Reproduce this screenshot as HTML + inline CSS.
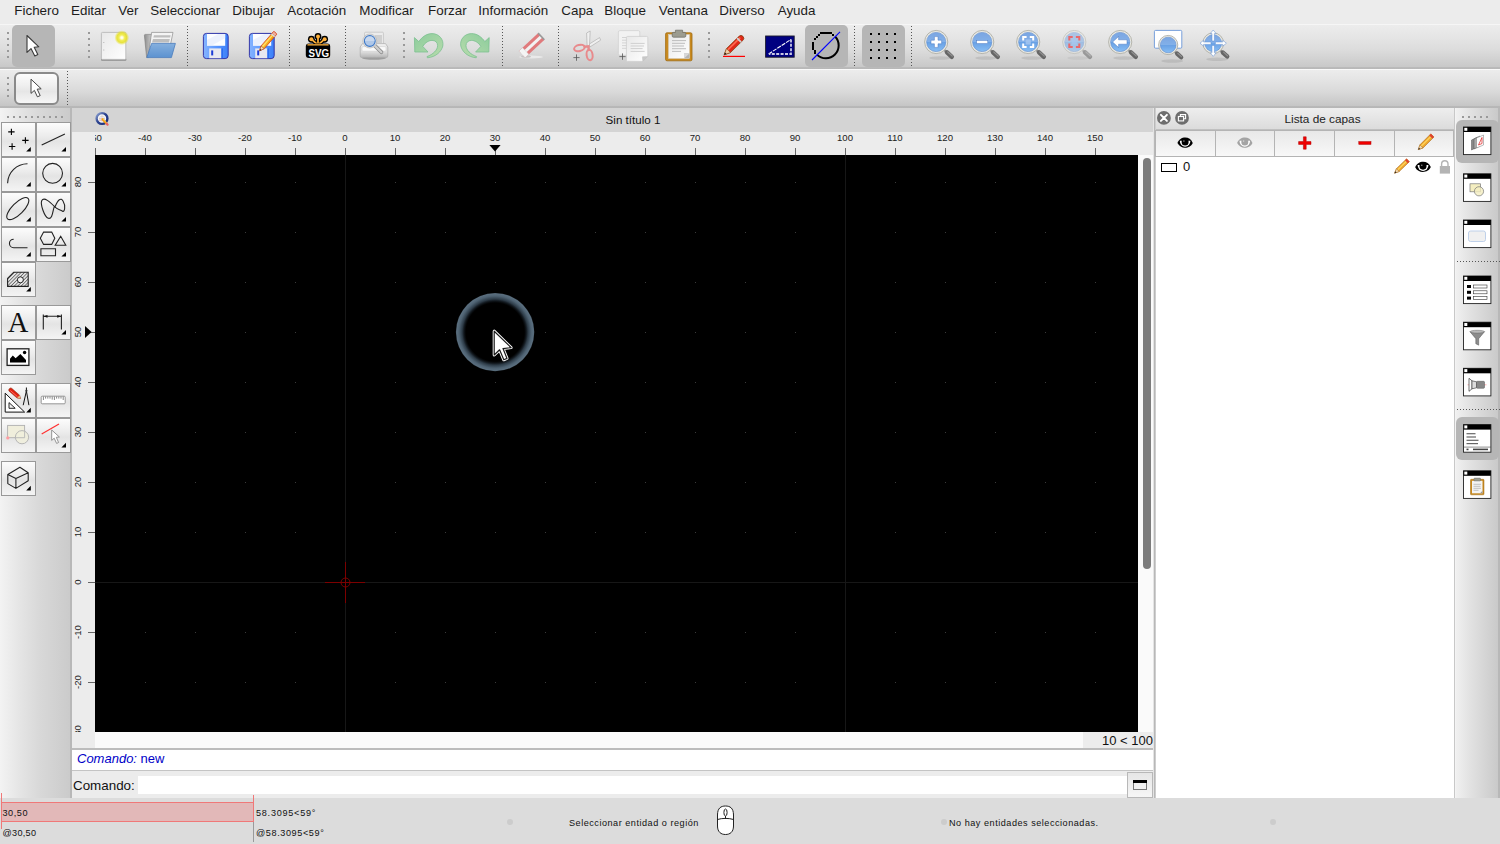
<!DOCTYPE html><html><head><meta charset="utf-8"><title>QCAD</title><style>
*{box-sizing:border-box;margin:0;padding:0}
html,body{width:1500px;height:844px;overflow:hidden}
body{position:relative;background:#ececec;font-family:"Liberation Sans",sans-serif;color:#1a1a1a;font-size:13px}
.a{position:absolute}
svg{position:absolute;overflow:visible}
#menubar{left:0;top:0;width:1500px;height:24px;background:#ececec}
#menubar span{position:absolute;top:2px;font-size:13.4px;line-height:18px;color:#1c1c1c;white-space:nowrap}
#tb1{left:0;top:24px;width:1500px;height:45px;background:linear-gradient(#f6f6f6 0,#f6f6f6 1px,#ececec 1px,#e6e6e6 12px,#dcdcdc 26px,#c9c9c9 42.5px,#bababa 43.2px,#b8b8b8 45px);overflow:hidden}
#tb2{left:0;top:69px;width:1500px;height:39px;background:linear-gradient(#fafafa 0,#fafafa 1px,#ececec 1px,#e5e5e5 10px,#d9d9d9 23px,#c6c6c6 36.5px,#b8b8b8 37.2px,#b6b6b6 39px)}
#left{left:0;top:108px;width:72px;height:690px;background:linear-gradient(90deg,#f3f3f3 0,#e6e6e6 18px,#d8d8d8 40px,#cbcbcb 69.5px,#b8b8b8 70.2px,#b8b8b8 72px)}
#tabbar{left:72px;top:108px;width:1082px;height:24px;background:#d4d4d4}
#hruler{left:72px;top:132px;width:1082px;height:23px;background:#ececec;overflow:hidden}
#vruler{left:72px;top:155px;width:23px;height:577px;background:#ececec;overflow:hidden}
#canvas{left:95px;top:155px;width:1043px;height:577px;background:#000;overflow:hidden}
#vscroll{left:1138px;top:155px;width:16px;height:577px;background:#fafafa}
#hscroll{left:95px;top:732px;width:1059px;height:16px;background:#fafafa}
#status{left:0;top:798px;width:1500px;height:46px;background:#dcdcdc}
#right{left:1156px;top:108px;width:298px;height:690px;background:#fff}
#rtb{left:1454px;top:108px;width:46px;height:690px;background:linear-gradient(90deg,#c8c8c8 0,#c8c8c8 0.8px,#f6f6f6 1px,#f0f0f0 2px,#e2e2e2 16px,#d4d4d4 32px,#cacaca 43.5px,#b8b8b8 44.2px,#b8b8b8 46px)}
.hl{font-size:9.6px;line-height:10px;color:#222;white-space:nowrap;text-align:center;width:40px;margin-left:-20px;top:1px}
.ht{width:1px;height:7px;background:#666;top:16px}
.vl{font-size:9.6px;line-height:10px;color:#222;white-space:nowrap;text-align:center;width:40px;height:10px;transform:rotate(-90deg);transform-origin:center center}
.vt{height:1px;width:7px;background:#666;left:16px}
.tbtn{width:35px;height:35px;border:1px solid #999;background:linear-gradient(#fcfcfc 0%,#ececec 40%,#e4e4e4 55%,#f4f4f4 100%)}
.st{font-size:9.1px;color:#111;white-space:nowrap;line-height:12px;letter-spacing:0.52px}
.hd{width:2px;height:2px;background:#999}
.sep{width:1px;background-image:linear-gradient(#555 0,#555 1px,transparent 1px,transparent 3px);background-size:1px 3px}
.press{background:#b6b6b6;border-radius:5px}
.dot{width:6px;height:6px;border-radius:3px;background:#cccccc}
</style></head><body>
<div id="menubar" class="a">
<span style="left:14.3px">Fichero</span>
<span style="left:71px">Editar</span>
<span style="left:118.3px">Ver</span>
<span style="left:150.3px">Seleccionar</span>
<span style="left:232.3px">Dibujar</span>
<span style="left:287.3px">Acotación</span>
<span style="left:359.3px">Modificar</span>
<span style="left:428px">Forzar</span>
<span style="left:478.3px">Información</span>
<span style="left:561.3px">Capa</span>
<span style="left:604.3px">Bloque</span>
<span style="left:658.7px">Ventana</span>
<span style="left:719.3px">Diverso</span>
<span style="left:777.7px">Ayuda</span>
</div>
<div id="tb1" class="a">
<div class="a hd" style="left:7px;top:8px"></div>
<div class="a hd" style="left:7px;top:14px"></div>
<div class="a hd" style="left:7px;top:20px"></div>
<div class="a hd" style="left:7px;top:26px"></div>
<div class="a hd" style="left:7px;top:32px"></div>
<div class="a hd" style="left:88px;top:8px"></div>
<div class="a hd" style="left:88px;top:14px"></div>
<div class="a hd" style="left:88px;top:20px"></div>
<div class="a hd" style="left:88px;top:26px"></div>
<div class="a hd" style="left:88px;top:32px"></div>
<div class="a hd" style="left:403px;top:8px"></div>
<div class="a hd" style="left:403px;top:14px"></div>
<div class="a hd" style="left:403px;top:20px"></div>
<div class="a hd" style="left:403px;top:26px"></div>
<div class="a hd" style="left:403px;top:32px"></div>
<div class="a hd" style="left:708px;top:8px"></div>
<div class="a hd" style="left:708px;top:14px"></div>
<div class="a hd" style="left:708px;top:20px"></div>
<div class="a hd" style="left:708px;top:26px"></div>
<div class="a hd" style="left:708px;top:32px"></div>
<div class="a sep" style="left:187px;top:2px;height:41px"></div>
<div class="a sep" style="left:289px;top:2px;height:41px"></div>
<div class="a sep" style="left:345px;top:2px;height:41px"></div>
<div class="a sep" style="left:502px;top:2px;height:41px"></div>
<div class="a sep" style="left:558px;top:2px;height:41px"></div>
<div class="a sep" style="left:854px;top:2px;height:41px"></div>
<div class="a sep" style="left:911px;top:2px;height:41px"></div>
<div class="a press" style="left:12px;top:1px;width:43px;height:42px"></div>
<div class="a press" style="left:805px;top:1px;width:43px;height:42px"></div>
<div class="a press" style="left:862px;top:1px;width:43px;height:42px"></div>
<svg style="left:0;top:0" width="1500" height="45" viewBox="0 24 1500 45"><defs>
<linearGradient id="lensg" x1="0" y1="0" x2="0" y2="1"><stop offset="0" stop-color="#5e92dc"/><stop offset="0.5" stop-color="#68a0e4"/><stop offset="1" stop-color="#88bef4"/></linearGradient>
<radialGradient id="glow"><stop offset="0" stop-color="#ffffff"/><stop offset="0.14" stop-color="#fffde0"/><stop offset="0.38" stop-color="#f2ee58"/><stop offset="0.66" stop-color="#e6e024" stop-opacity="0.88"/><stop offset="1" stop-color="#e6e024" stop-opacity="0"/></radialGradient><linearGradient id="fback" x1="0" y1="0" x2="1" y2="0"><stop offset="0" stop-color="#8e8e8e"/><stop offset="1" stop-color="#d0d0d0"/></linearGradient>
<linearGradient id="pg" x1="0" y1="0" x2="1" y2="1"><stop offset="0" stop-color="#e8e8e8"/><stop offset="1" stop-color="#ffffff"/></linearGradient>
<linearGradient id="fold" x1="0" y1="0" x2="0" y2="1"><stop offset="0" stop-color="#86b0de"/><stop offset="1" stop-color="#5c92d0"/></linearGradient>
<linearGradient id="flop" x1="0" y1="0" x2="1" y2="0"><stop offset="0" stop-color="#86b4ff"/><stop offset="0.5" stop-color="#5c98ff"/><stop offset="1" stop-color="#3c80f8"/></linearGradient>
<linearGradient id="undo" x1="0" y1="0" x2="1" y2="1"><stop offset="0" stop-color="#8ccc9c"/><stop offset="1" stop-color="#b8dcac"/></linearGradient>
<linearGradient id="prn" x1="0" y1="0" x2="0" y2="1"><stop offset="0" stop-color="#f2f2f2"/><stop offset="0.6" stop-color="#dcdcdc"/><stop offset="1" stop-color="#b4b4b4"/></linearGradient>
<linearGradient id="pcl" x1="0" y1="0" x2="1" y2="1"><stop offset="0" stop-color="#ffd84a"/><stop offset="1" stop-color="#f09000"/></linearGradient>
</defs><path d="M27 35.5 L27 52.4 L31 48.6 L34.8 56 L37.8 54.6 L34.2 47.2 L38.8 46.8 Z" fill="#fff" stroke="#3a3a3a" stroke-width="1.1" stroke-linejoin="round"/><rect x="101" y="58.6" width="25.4" height="2.2" rx="1" fill="#8c8c8c"/><rect x="101.4" y="32.4" width="24.4" height="27" rx="1" fill="url(#pg)" stroke="#b4b4b4" stroke-width="0.8"/><path d="M103 42.5h1.4M103 50h1.4" stroke="#bbb" stroke-width="0.8"/><circle cx="121.8" cy="37.7" r="7.4" fill="url(#glow)"/><path d="M144.4 35.4 Q144.4 34.4 145.4 34.4 L152 34.4 L148.4 57.4 L146.6 57.4 Z" fill="url(#fback)" stroke="#7a7a7a" stroke-width="0.6"/><path d="M151.6 32.4 L173 32.4 L170.4 45 L148.4 55 Z" fill="#f4f4f4" stroke="#8c8c8c" stroke-width="0.7"/><path d="M154 35.2 L170.6 35.2 L170.2 37.6 L153.4 37.6 Z M153 39 L169.8 39 L169 42.6 L152 42.6 Z" fill="#b4b4b4" opacity="0.85"/><path d="M151.6 43.4 L175.4 43.4 L171.4 57.6 L146.8 57.6 Z" fill="url(#fold)" stroke="#4a7cbc" stroke-width="0.8" stroke-linejoin="round"/><rect x="203.4" y="33.4" width="24.8" height="25.2" rx="3" fill="url(#flop)" stroke="#2828a0" stroke-width="0.9"/><rect x="207.0" y="34" width="18.2" height="11.8" fill="#fcfdff"/><path d="M207.0 40 L218.4 34 L225.20000000000002 34 L225.20000000000002 38 L211.4 45.800 L207.0 45.800Z" fill="#dfe8fb" opacity="0.55"/><rect x="209.20000000000002" y="48.4" width="12.2" height="9.8" fill="#e8e8f0"/><rect x="211.20000000000002" y="50.4" width="2" height="5" fill="#1c3cd8"/><rect x="221.4" y="48.4" width="1.6" height="9.8" fill="#2c6cf0"/><rect x="249.4" y="33.4" width="24.8" height="25.2" rx="3" fill="url(#flop)" stroke="#2828a0" stroke-width="0.9"/><rect x="253.0" y="34" width="18.2" height="11.8" fill="#fcfdff"/><path d="M253.0 40 L264.4 34 L271.2 34 L271.2 38 L257.4 45.800 L253.0 45.800Z" fill="#dfe8fb" opacity="0.55"/><rect x="255.20000000000002" y="48.4" width="12.2" height="9.8" fill="#e8e8f0"/><rect x="257.2" y="50.4" width="2" height="5" fill="#1c3cd8"/><rect x="267.4" y="48.4" width="1.6" height="9.8" fill="#2c6cf0"/><g transform="translate(259.6,50.8) rotate(-49)"><path d="M0 0 L4.6 -2.1 L23 -2.1 Q24 -2.1 24 -1 L24 1 Q24 2.1 23 2.1 L4.6 2.1 Z" fill="url(#pcl)" stroke="#d03818" stroke-width="0.7"/><path d="M5 -0.5 L20 -0.5" stroke="#ffe070" stroke-width="1.1"/><path d="M0 0 L4.6 -2.1 L4.6 2.1 Z" fill="#f4dcb8" stroke="#a04020" stroke-width="0.5"/><path d="M0 0 L1.8 -0.8 L1.8 0.8Z" fill="#222"/><rect x="21.4" y="-2.1" width="2.6" height="4.2" rx="0.8" fill="#f0b0a0" stroke="#d03818" stroke-width="0.5"/><rect x="19.8" y="-2.1" width="1.6" height="4.2" fill="#d8d8d8"/></g><path d="M318 45 L318.00 36.40" stroke="#000" stroke-width="4.2" stroke-linecap="round"/><circle cx="318.00" cy="36.40" r="3.4" fill="#000"/><path d="M318 45 L311.36 39.23" stroke="#000" stroke-width="4.2" stroke-linecap="round"/><circle cx="311.36" cy="39.23" r="3.4" fill="#000"/><path d="M318 45 L324.64 39.23" stroke="#000" stroke-width="4.2" stroke-linecap="round"/><circle cx="324.64" cy="39.23" r="3.4" fill="#000"/><path d="M318 45 L318.00 36.40" stroke="#ffb13b" stroke-width="1.7" stroke-linecap="round"/><circle cx="318.00" cy="36.40" r="2" fill="#ffb13b"/><path d="M318 45 L311.36 39.23" stroke="#ffb13b" stroke-width="1.7" stroke-linecap="round"/><circle cx="311.36" cy="39.23" r="2" fill="#ffb13b"/><path d="M318 45 L324.64 39.23" stroke="#ffb13b" stroke-width="1.7" stroke-linecap="round"/><circle cx="324.64" cy="39.23" r="2" fill="#ffb13b"/><rect x="305.8" y="43.6" width="24.4" height="14.4" rx="3" fill="#000"/><rect x="307.4" y="44.2" width="21.2" height="1.3" fill="#ffb13b"/><text x="308.6" y="57" font-family="Liberation Sans,sans-serif" font-weight="bold" font-size="11" fill="#fff" textLength="20.6" lengthAdjust="spacingAndGlyphs">SVG</text><ellipse cx="374" cy="58" rx="12" ry="1.800" fill="#000" opacity="0.25"/><rect x="364.6" y="32.2" width="18.8" height="13" rx="1" fill="#ececec" stroke="#bdbdbd" stroke-width="0.7"/><rect x="375" y="35" width="7" height="8" fill="#d0d0d0"/><path d="M362.5 43.6 L385.5 43.6 L387.8 47 L387.8 56 Q387.8 57.6 386 57.6 L362 57.6 Q360.200 57.600 360.200 56 L360.200 47 Z" fill="url(#prn)" stroke="#aaa" stroke-width="0.7"/><rect x="362" y="46.6" width="24" height="4.6" rx="1" fill="#fafafa" stroke="#c8c8c8" stroke-width="0.5"/><path d="M374.8 45.6 L381.4 52.2" stroke="#8c8c8c" stroke-width="3.8" stroke-linecap="round"/><path d="M374.8 45.6 L381.4 52.2" stroke="#cfcfcf" stroke-width="2.200" stroke-linecap="round"/><circle cx="369.8" cy="41" r="7" fill="#e2e2e2" stroke="#b0b0b0" stroke-width="0.6"/><circle cx="369.8" cy="41" r="5.400" fill="#b0c8e8" stroke="#3c78c8" stroke-width="1.1"/><path d="M364.7 41 A5.1 5.1 0 0 1 374.900 41 Z" fill="#fff" opacity="0.3"/><path d="M414.4 37.6 L414.8 52 L428 52 L422.8 46.4 C425 42.5 429 40.4 432 40.4 C435.5 40.4 437.6 42.5 437.6 45.6 C437.6 50 433 54.5 427 56.6 L427.4 57.8 C436 57 441.5 51.5 442.8 46 C444 39.5 439 33.6 432 33.6 C426.5 33.6 422 37 418.8 41.6 Z" fill="url(#undo)" stroke="#7cc090" stroke-width="0.8" stroke-linejoin="round"/><g transform="translate(903.6,0) scale(-1,1)"><path d="M414.4 37.6 L414.8 52 L428 52 L422.8 46.4 C425 42.5 429 40.4 432 40.4 C435.5 40.4 437.6 42.5 437.6 45.6 C437.6 50 433 54.5 427 56.6 L427.4 57.8 C436 57 441.5 51.5 442.8 46 C444 39.5 439 33.6 432 33.6 C426.5 33.6 422 37 418.8 41.6 Z" fill="url(#undo)" stroke="#7cc090" stroke-width="0.8" stroke-linejoin="round"/></g><ellipse cx="531" cy="57" rx="12" ry="1.500" fill="#fff" opacity="0.5"/><ellipse cx="526" cy="56.600" rx="5" ry="1.200" fill="#888" opacity="0.4"/><g transform="translate(522,54.4) rotate(-43)"><rect x="0" y="-4.600" width="26.500" height="9.200" fill="#e07a7c"/><rect x="0" y="-1.500" width="26.500" height="3" fill="#f2f2f2"/><rect x="0" y="-4.600" width="5" height="9.200" fill="#f4f4f4" stroke="#ccc" stroke-width="0.400"/><rect x="25.500" y="-4.600" width="1.600" height="9.200" fill="#999"/></g><path d="M587.2 47 L586.6 33 L590.2 31 L589.4 47 Z" fill="#f0f0f0" stroke="#b0b0b0" stroke-width="0.7"/><path d="M589.4 44 L599.6 37.6 L600.6 40.2 L589.8 47 Z" fill="#f0f0f0" stroke="#b0b0b0" stroke-width="0.7"/><ellipse cx="579.4" cy="48" rx="5.400" ry="3" transform="rotate(-14 579.400 48)" fill="none" stroke="#e88a8c" stroke-width="2"/><ellipse cx="589.6" cy="55" rx="3" ry="5.200" transform="rotate(-8 589.600 55)" fill="none" stroke="#e88a8c" stroke-width="2"/><path d="M584.6 46.800 L588.4 46.4 L588.8 50" fill="none" stroke="#e88a8c" stroke-width="2.400" stroke-linecap="round"/><path d="M573.4 57.6 H579.6 M576.5 54.4 V60.800" stroke="#555" stroke-width="0.8"/><rect x="618.4" y="30.6" width="21.4" height="24.6" rx="1.400" fill="#f2f2f2" stroke="#d0d0d0" stroke-width="0.7"/><path d="M622 37.5H628M622 40.200H628M622 42.900H628M622 45.600H628M622 48.300H628" stroke="#d4d4d4" stroke-width="1"/><path d="M627.6 36.400 L646.6 36.400 Q647.8 36.400 647.8 37.600 L647.8 56.400 L642.8 61.400 L627.600 61.400 Q626.400 61.400 626.400 60.200 L626.400 37.600 Q626.400 36.400 627.600 36.400Z" fill="url(#pg)" stroke="#cacaca" stroke-width="0.7"/><path d="M647.8 56.400 L642.8 61.400 L642.400 56.800 Z" fill="#c8c8c8" stroke="#bbb" stroke-width="0.400"/><path d="M630.6 43.400H644.600M630.600 46H644M630.600 48.600H642.600M630.600 51.400H644.600" stroke="#cfcfcf" stroke-width="1"/><path d="M619.4 56.600H625.600M622.500 53.400V59.800" stroke="#555" stroke-width="0.8"/><rect x="665.6" y="32.800" width="26.400" height="28" rx="1.400" fill="#c88a20" stroke="#a06a10" stroke-width="0.8"/><rect x="668.6" y="34.6" width="20.800" height="23.800" fill="url(#pg)" stroke="#d8d8d8" stroke-width="0.5"/><path d="M672 40.600H686M672 43.300H685M672 46H684M672 48.700H686M672 51.400H681" stroke="#bdbdbd" stroke-width="1"/><path d="M684 58.400 L689.400 58.400 L689.400 53.400 L684 53.400 Z" fill="#b4b4b4"/><path d="M684 58.400 L689.400 53.400 L684 53.400Z" fill="#d8d8d8"/><path d="M675.400 30.200 H682.600 V32.400 H685 Q685.800 32.400 685.800 33.400 L685.800 36 Q685.800 37.200 684.600 37.200 L673.400 37.200 Q672.200 37.200 672.200 36 L672.200 33.400 Q672.200 32.400 673 32.400 H675.400 Z" fill="#9c9c90" stroke="#6c6c64" stroke-width="0.7"/><path d="M723 56.400 H745" stroke="#ff0000" stroke-width="1.2"/><g transform="translate(724.2,54.8) rotate(-44.5)"><path d="M0 0 L6 -2.800 L23.500 -2.800 Q26.300 -2.800 26.300 0 Q26.300 2.800 23.500 2.800 L6 2.800 Z" fill="#e02818" stroke="#804010" stroke-width="0.7"/><path d="M6 -1 L23.500 -1" stroke="#ff6a50" stroke-width="1.500"/><path d="M0 0 L6 -2.800 L6 2.800 Z" fill="#f0d0a8" stroke="#804010" stroke-width="0.5"/><path d="M0 0 L2.200 -1.100 L2.200 1.100Z" fill="#111"/><rect x="20" y="-2.800" width="1.800" height="5.600" fill="#d0d0d0"/></g><rect x="765.6" y="36" width="28.600" height="21.200" fill="#000080" stroke="#1a1a2a" stroke-width="0.9"/><path d="M768.6 54 L791 39.400" stroke="#fff" stroke-width="1.1" fill="none" stroke-dasharray="4.2 1"/><path d="M791 39.400 L791 54 L769 54" stroke="#c8c8e4" stroke-width="1.800" fill="none" stroke-dasharray="3 1.400"/><path d="M816.95 54.65 A12.8 12.8 0 0 0 835.05 36.55" fill="none" stroke="#000" stroke-width="2"/><path d="M812 42h2v2h-2zM812 44h2v2h-2zM812 46h2v2h-2zM812 48h2v2h-2zM814 38h2v2h-2zM814 50h2v2h-2zM814 52h2v2h-2zM816 36h2v2h-2zM818 34h2v2h-2zM820 32h2v2h-2zM822 32h2v2h-2zM824 32h2v2h-2zM826 32h2v2h-2zM828 32h2v2h-2zM830 32h2v2h-2zM832 34h2v2h-2z" fill="#000" shape-rendering="crispEdges"/><path d="M812 60 L840 31.800" stroke="#0000ff" stroke-width="1.100"/><path d="M870 33h2v2h-2zM870 41h2v2h-2zM870 49h2v2h-2zM870 57h2v2h-2zM878 33h2v2h-2zM878 41h2v2h-2zM878 49h2v2h-2zM878 57h2v2h-2zM886 33h2v2h-2zM886 41h2v2h-2zM886 49h2v2h-2zM886 57h2v2h-2zM894 33h2v2h-2zM894 41h2v2h-2zM894 49h2v2h-2zM894 57h2v2h-2z" fill="#000"/><g opacity="1.0"><ellipse cx="940.2" cy="58" rx="11" ry="1.8" fill="#000" opacity="0.09"/><path d="M943.6 49.4 L946.7 52.3" stroke="#8a8a8a" stroke-width="2.2" stroke-linecap="round"/><path d="M947.0 52.4 L951.8000000000001 56.8" stroke="#666" stroke-width="4.4" stroke-linecap="round"/><path d="M947.8000000000001 52.0 L952.2 56.0" stroke="#909090" stroke-width="1.2" stroke-linecap="round"/><circle cx="936.2" cy="42" r="11.6" fill="#e8e8e2" stroke="#a8a8a0" stroke-width="0.8"/><circle cx="936.2" cy="42" r="9.6" fill="url(#lensg)" stroke="#5a8ad0" stroke-width="0.6"/><path d="M926.6 42 A9.6 9.6 0 0 1 945.8000000000001 42 Z" fill="#fff" opacity="0.18"/></g><g opacity="1.0"><ellipse cx="986.2" cy="58" rx="11" ry="1.8" fill="#000" opacity="0.09"/><path d="M989.6 49.4 L992.7 52.3" stroke="#8a8a8a" stroke-width="2.2" stroke-linecap="round"/><path d="M993.0 52.4 L997.8000000000001 56.8" stroke="#666" stroke-width="4.4" stroke-linecap="round"/><path d="M993.8000000000001 52.0 L998.2 56.0" stroke="#909090" stroke-width="1.2" stroke-linecap="round"/><circle cx="982.2" cy="42" r="11.6" fill="#e8e8e2" stroke="#a8a8a0" stroke-width="0.8"/><circle cx="982.2" cy="42" r="9.6" fill="url(#lensg)" stroke="#5a8ad0" stroke-width="0.6"/><path d="M972.6 42 A9.6 9.6 0 0 1 991.8000000000001 42 Z" fill="#fff" opacity="0.18"/></g><g opacity="1.0"><ellipse cx="1032.2" cy="58" rx="11" ry="1.8" fill="#000" opacity="0.09"/><path d="M1035.6000000000001 49.4 L1038.7 52.3" stroke="#8a8a8a" stroke-width="2.2" stroke-linecap="round"/><path d="M1039.0 52.4 L1043.8 56.8" stroke="#666" stroke-width="4.4" stroke-linecap="round"/><path d="M1039.8 52.0 L1044.2 56.0" stroke="#909090" stroke-width="1.2" stroke-linecap="round"/><circle cx="1028.2" cy="42" r="11.6" fill="#e8e8e2" stroke="#a8a8a0" stroke-width="0.8"/><circle cx="1028.2" cy="42" r="9.6" fill="url(#lensg)" stroke="#5a8ad0" stroke-width="0.6"/><path d="M1018.6 42 A9.6 9.6 0 0 1 1037.8 42 Z" fill="#fff" opacity="0.18"/></g><g opacity="1.0"><ellipse cx="1124.2" cy="58" rx="11" ry="1.8" fill="#000" opacity="0.09"/><path d="M1127.6000000000001 49.4 L1130.7 52.3" stroke="#8a8a8a" stroke-width="2.2" stroke-linecap="round"/><path d="M1131.0 52.4 L1135.8 56.8" stroke="#666" stroke-width="4.4" stroke-linecap="round"/><path d="M1131.8 52.0 L1136.2 56.0" stroke="#909090" stroke-width="1.2" stroke-linecap="round"/><circle cx="1120.2" cy="42" r="11.6" fill="#e8e8e2" stroke="#a8a8a0" stroke-width="0.8"/><circle cx="1120.2" cy="42" r="9.6" fill="url(#lensg)" stroke="#5a8ad0" stroke-width="0.6"/><path d="M1110.6000000000001 42 A9.6 9.6 0 0 1 1129.8 42 Z" fill="#fff" opacity="0.18"/></g><g opacity="0.55"><ellipse cx="1078.3" cy="58" rx="11" ry="1.8" fill="#000" opacity="0.09"/><path d="M1081.7 49.4 L1084.8 52.3" stroke="#8a8a8a" stroke-width="2.2" stroke-linecap="round"/><path d="M1085.1 52.4 L1089.8999999999999 56.8" stroke="#666" stroke-width="4.4" stroke-linecap="round"/><path d="M1085.8999999999999 52.0 L1090.3 56.0" stroke="#909090" stroke-width="1.2" stroke-linecap="round"/><circle cx="1074.3" cy="42" r="11.6" fill="#e8e8e2" stroke="#a8a8a0" stroke-width="0.8"/><circle cx="1074.3" cy="42" r="9.6" fill="url(#lensg)" stroke="#5a8ad0" stroke-width="0.6"/><path d="M1064.7 42 A9.6 9.6 0 0 1 1083.8999999999999 42 Z" fill="#fff" opacity="0.18"/></g><path d="M931 40.200 H934.400 V36.600 H938 V40.200 H941.600 V43.800 H938 V47.400 H934.400 V43.800 H931 Z" fill="#fff" stroke="#4a78c0" stroke-width="0.5"/><rect x="976.6" y="40.400" width="11.200" height="3.200" fill="#fff" stroke="#4a78c0" stroke-width="0.5"/><g fill="#fff" opacity="1"><path d="M1022.2 36 L1026.6000000000001 36 L1026.6000000000001 38 L1024.2 38 L1024.2 40.4 L1022.2 40.4 Z"/><path d="M1022.2 48 L1026.6000000000001 48 L1026.6000000000001 46 L1024.2 46 L1024.2 43.6 L1022.2 43.6 Z"/><path d="M1034.2 36 L1029.8 36 L1029.8 38 L1032.2 38 L1032.2 40.4 L1034.2 40.4 Z"/><path d="M1034.2 48 L1029.8 48 L1029.8 46 L1032.2 46 L1032.2 43.6 L1034.2 43.6 Z"/></g><rect x="1025.6000000000001" y="39.4" width="5.200" height="5.200" fill="#a8c8f0" opacity="0.8"/><g fill="#f06060" opacity="0.9"><path d="M1068.3 36 L1072.7 36 L1072.7 38 L1070.3 38 L1070.3 40.4 L1068.3 40.4 Z"/><path d="M1068.3 48 L1072.7 48 L1072.7 46 L1070.3 46 L1070.3 43.6 L1068.3 43.6 Z"/><path d="M1080.3 36 L1075.8999999999999 36 L1075.8999999999999 38 L1078.3 38 L1078.3 40.4 L1080.3 40.4 Z"/><path d="M1080.3 48 L1075.8999999999999 48 L1075.8999999999999 46 L1078.3 46 L1078.3 43.6 L1080.3 43.6 Z"/></g><rect x="1071.7" y="39.4" width="5.200" height="5.200" fill="#a8c8f0" opacity="0.7200000000000001"/><path d="M1112.600 42 L1118.600 36.400 L1118.600 39.800 L1127 39.800 L1127 44.200 L1118.600 44.200 L1118.600 47.600 Z" fill="#fff" stroke="#4a78c0" stroke-width="0.5"/><rect x="1154.400" y="30.400" width="27.400" height="17.800" rx="1.200" fill="#fff" stroke="#6a96d8" stroke-width="0.9"/><g opacity="1.0"><ellipse cx="1172.2" cy="61" rx="11" ry="1.8" fill="#000" opacity="0.09"/><path d="M1174.3241379310346 51.12413793103448 L1176.8896551724138 53.52413793103448" stroke="#8a8a8a" stroke-width="2.2" stroke-linecap="round"/><path d="M1177.1379310344828 53.606896551724134 L1181.1103448275862 57.248275862068965" stroke="#666" stroke-width="4.4" stroke-linecap="round"/><path d="M1177.8 53.275862068965516 L1181.441379310345 56.58620689655172" stroke="#909090" stroke-width="1.2" stroke-linecap="round"/><circle cx="1168.2" cy="45" r="9.6" fill="#e8e8e2" stroke="#a8a8a0" stroke-width="0.8"/><circle cx="1168.2" cy="45" r="7.8" fill="url(#lensg)" stroke="#5a8ad0" stroke-width="0.6"/><path d="M1160.4 45 A7.8 7.8 0 0 1 1176.0 45 Z" fill="#fff" opacity="0.18"/></g><g opacity="1.0"><ellipse cx="1217.2" cy="59.2" rx="11" ry="1.8" fill="#000" opacity="0.09"/><path d="M1219.8344827586207 49.834482758620695 L1222.6137931034484 52.43448275862069" stroke="#8a8a8a" stroke-width="2.2" stroke-linecap="round"/><path d="M1222.8827586206896 52.52413793103449 L1227.1862068965518 56.46896551724139" stroke="#666" stroke-width="4.4" stroke-linecap="round"/><path d="M1223.6000000000001 52.16551724137931 L1227.544827586207 55.751724137931035" stroke="#909090" stroke-width="1.2" stroke-linecap="round"/><circle cx="1213.2" cy="43.2" r="10.4" fill="#e8e8e2" stroke="#a8a8a0" stroke-width="0.8"/><circle cx="1213.2" cy="43.2" r="8.4" fill="url(#lensg)" stroke="#5a8ad0" stroke-width="0.6"/><path d="M1204.8 43.2 A8.4 8.4 0 0 1 1221.6000000000001 43.2 Z" fill="#fff" opacity="0.18"/></g><g fill="#fff" stroke="#5a8ad0" stroke-width="0.5"><g transform="translate(1213.200,43.200) rotate(0)"><path d="M-1.200 -2.200 L-1.200 -9.600 L-2.900 -9.600 L0 -13.200 L2.900 -9.600 L1.200 -9.600 L1.200 -2.200 Z"/></g><g transform="translate(1213.200,43.200) rotate(90)"><path d="M-1.200 -2.200 L-1.200 -9.600 L-2.900 -9.600 L0 -13.200 L2.900 -9.600 L1.200 -9.600 L1.200 -2.200 Z"/></g><g transform="translate(1213.200,43.200) rotate(180)"><path d="M-1.200 -2.200 L-1.200 -9.600 L-2.900 -9.600 L0 -13.200 L2.900 -9.600 L1.200 -9.600 L1.200 -2.200 Z"/></g><g transform="translate(1213.200,43.200) rotate(270)"><path d="M-1.200 -2.200 L-1.200 -9.600 L-2.900 -9.600 L0 -13.200 L2.900 -9.600 L1.200 -9.600 L1.200 -2.200 Z"/></g></g></svg>
</div>
<div id="tb2" class="a">
<div class="a hd" style="left:7px;top:8px"></div>
<div class="a hd" style="left:7px;top:14px"></div>
<div class="a hd" style="left:7px;top:20px"></div>
<div class="a hd" style="left:7px;top:26px"></div>
<div class="a sep" style="left:67px;top:2px;height:35px"></div>
<div class="a" style="left:14px;top:3px;width:45px;height:33px;border:2px solid #8a8a8a;border-radius:6px;background:linear-gradient(#fcfcfc 0%,#efefef 40%,#e6e6e6 60%,#f6f6f6 100%)"></div>
<svg style="left:0;top:0" width="1500" height="39" viewBox="0 69 1500 39"><path d="M31 79.2 L31 93.4 L34.4 90.4 L37.4 96.800 L40.200 95.600 L37.200 89.200 L41.200 88.800 Z" fill="#fff" stroke="#444" stroke-width="1" stroke-linejoin="round"/></svg>
</div>
<div id="left" class="a">
<div class="a hd" style="left:7px;top:8px"></div>
<div class="a hd" style="left:13px;top:8px"></div>
<div class="a hd" style="left:19px;top:8px"></div>
<div class="a hd" style="left:25px;top:8px"></div>
<div class="a hd" style="left:31px;top:8px"></div>
<div class="a hd" style="left:37px;top:8px"></div>
<div class="a hd" style="left:43px;top:8px"></div>
<div class="a hd" style="left:49px;top:8px"></div>
<div class="a hd" style="left:55px;top:8px"></div>
<div class="a hd" style="left:61px;top:8px"></div>
<div class="a tbtn" style="left:1px;top:14px"></div>
<div class="a tbtn" style="left:36px;top:14px"></div>
<div class="a tbtn" style="left:1px;top:49px"></div>
<div class="a tbtn" style="left:36px;top:49px"></div>
<div class="a tbtn" style="left:1px;top:84px"></div>
<div class="a tbtn" style="left:36px;top:84px"></div>
<div class="a tbtn" style="left:1px;top:119px"></div>
<div class="a tbtn" style="left:36px;top:119px"></div>
<div class="a tbtn" style="left:1px;top:154px"></div>
<div class="a tbtn" style="left:1px;top:197px"></div>
<div class="a tbtn" style="left:36px;top:197px"></div>
<div class="a tbtn" style="left:1px;top:232px"></div>
<div class="a tbtn" style="left:1px;top:275px"></div>
<div class="a tbtn" style="left:36px;top:275px"></div>
<div class="a tbtn" style="left:1px;top:310px"></div>
<div class="a tbtn" style="left:36px;top:310px"></div>
<div class="a tbtn" style="left:1px;top:353px"></div>
<svg style="left:0;top:0" width="72" height="690" viewBox="0 108 72 690"><path d="M30.8 151.6 L26.200000000000003 151.6 L30.8 147.0 Z" fill="#000"/><path d="M66 151.6 L61.4 151.6 L66 147.0 Z" fill="#000"/><path d="M30.8 186.6 L26.200000000000003 186.6 L30.8 182.0 Z" fill="#000"/><path d="M66 186.6 L61.4 186.6 L66 182.0 Z" fill="#000"/><path d="M30.8 221.6 L26.200000000000003 221.6 L30.8 217.0 Z" fill="#000"/><path d="M66 221.6 L61.4 221.6 L66 217.0 Z" fill="#000"/><path d="M30.8 256.6 L26.200000000000003 256.6 L30.8 252.00000000000003 Z" fill="#000"/><path d="M66 256.6 L61.4 256.6 L66 252.00000000000003 Z" fill="#000"/><path d="M30.8 291.6 L26.200000000000003 291.6 L30.8 287.0 Z" fill="#000"/><path d="M66 334.6 L61.4 334.6 L66 330.0 Z" fill="#000"/><path d="M30.8 412.4 L26.200000000000003 412.4 L30.8 407.79999999999995 Z" fill="#000"/><path d="M66 447.4 L61.4 447.4 L66 442.79999999999995 Z" fill="#000"/><path d="M30.8 490.4 L26.200000000000003 490.4 L30.8 485.79999999999995 Z" fill="#000"/><path d="M8.2 131.9H14.600000000000001M11.4 128.70000000000002V135.1M22.2 140.4H28.599999999999998M25.4 137.20000000000002V143.6M8.899999999999999 146.5H15.3M12.1 143.3V149.7" stroke="#000" stroke-width="1.1" fill="none"/><path d="M41.7 144.9 L64.9 134" stroke="#222" stroke-width="1.1" fill="none"/><path d="M7.6 183.2 A20 20 0 0 1 27.5 163.8" stroke="#222" stroke-width="1.1" fill="none"/><circle cx="52.6" cy="173.3" r="9.9" stroke="#222" stroke-width="1.1" fill="none"/><ellipse cx="17.800" cy="208.600" rx="14.500" ry="5.700" transform="rotate(-45 17.800 208.600)" stroke="#222" stroke-width="1.1" fill="none"/><path d="M41.8 200.5 C44 196.500 50 202 55 207 C58 199 61 197.500 63 201 C66 206 64.500 212.500 62.600 211.200 C60 209.500 57 209.500 55 207 C53 204.500 53.500 220 48.300 218.300 C44.500 217 40 204 41.800 200.500 Z" stroke="#222" stroke-width="1.1" fill="none"/><path d="M13.700 239.200 A4.250 4.250 0 0 0 13.700 247.700 L27.500 247.700" stroke="#222" stroke-width="1.1" fill="none"/><path d="M40.300 238.200 L43.600 232.100 L51.700 232.100 L54.800 238.200 L51.700 244.400 L43.600 244.400 Z M60.700 236.300 L55.200 245.300 L65.800 245.300 Z M40.900 248.700 H55.500 V255.800 H40.900 Z" stroke="#222" stroke-width="1.1" fill="none"/><defs><pattern id="hat" width="2.400" height="2.400" patternUnits="userSpaceOnUse" patternTransform="rotate(-45)"><rect width="2.400" height="2.400" fill="#e4e4e4"/><path d="M0 1.200H2.400" stroke="#555" stroke-width="0.7"/></pattern></defs><path d="M7.600 278.400 L13.700 272.200 L28.200 272.200 L28.200 286.400 L7.600 286.400 Z" fill="url(#hat)" stroke="#222" stroke-width="1.1"/><circle cx="20.400" cy="279.800" r="3" fill="#f0f0f0" stroke="#222" stroke-width="1"/><text x="18" y="331.500" font-family="Liberation Serif,serif" font-size="28.500" fill="#111" text-anchor="middle">A</text><path d="M43.300 314.400 V329.600 M61.400 314.400 V329.600 M43.300 316.300 H61.400" stroke="#222" stroke-width="1.100" fill="none"/><path d="M43.300 316.300 L47.500 314.900 L47.500 317.700 Z M61.400 316.300 L57.200 314.900 L57.200 317.700 Z" fill="#111"/><rect x="7.100" y="348.800" width="21.800" height="16.600" fill="#fff" stroke="#222" stroke-width="1.300"/><path d="M10 362.500 L10 358.700 L12.800 355.400 L15.600 358.200 L20.400 354 L26 360 L26 362.500 Z" fill="#000"/><circle cx="24.600" cy="352.500" r="1.700" fill="#000"/><path d="M5.200 393.200 L5.200 412.100 L24.600 412.100 Z" fill="#fff" stroke="#111" stroke-width="1" stroke-linejoin="miter"/><path d="M9 402.600 L9 408.300 L15.200 408.300 Z" fill="#f0f0f0" stroke="#111" stroke-width="0.900"/><g transform="translate(20.600,398.600) rotate(-139)"><path d="M0 0 L3 -1.900 L13.500 -1.900 Q15 -1.900 15 0 Q15 1.900 13.500 1.900 L3 1.900 Z" fill="#e02010" stroke="#803010" stroke-width="0.5"/><path d="M0 0 L3 -1.900 L3 1.900Z" fill="#e8b880"/><path d="M3.500 -0.600 L13 -0.600" stroke="#ff7060" stroke-width="0.900"/></g><path d="M26.400 387.500 L26.400 391 M26.400 391 L23.200 405.200 M26.400 391 L28.900 405.200" stroke="#111" stroke-width="1" fill="none"/><circle cx="26.400" cy="390.800" r="1.100" fill="#333"/><rect x="41.200" y="396.200" width="24" height="7.600" rx="1" fill="#fff" stroke="#8c8c8c" stroke-width="0.9"/><path d="M43.4 396.600V400.0M45.6 396.600V398.6M47.8 396.600V398.6M50.0 396.600V398.6M52.2 396.600V399.6M54.4 396.600V400.0M56.6 396.600V398.6M58.8 396.600V398.6M61.0 396.600V398.6M63.2 396.600V400.0" stroke="#555" stroke-width="0.7"/><rect x="7.600" y="425.400" width="17" height="12.300" fill="#f0eedc" stroke="#b0b0b0" stroke-width="0.9"/><circle cx="22" cy="437.200" r="6.600" fill="#f0eedc" fill-opacity="0.85" stroke="#b0b0b0" stroke-width="0.9"/><path d="M14.600 437.700 H24.600 V430.400" stroke="#b8b8b8" stroke-width="0.9" fill="none"/><circle cx="7.800" cy="437.900" r="1.600" fill="#ff9ca0"/><path d="M41.700 433.900 L59 424" stroke="#ff3030" stroke-width="1.200"/><path d="M51.700 430 L51.700 440.400 L54.200 438.200 L56.600 443.400 L58.600 442.500 L56.300 437.300 L59.400 437 Z" fill="#fff" stroke="#888" stroke-width="0.9" stroke-linejoin="round"/><path d="M19.900 467.300 L7.800 474.500 L15.900 478.400 L28.200 472.700 Z M7.800 474.500 L7.800 483.600 L15.900 488.400 L28.200 480.800 L28.200 472.700 M15.900 478.400 L15.900 488.400" stroke="#222" stroke-width="1.100" fill="none" stroke-linejoin="round"/></svg>
</div>
<div id="tabbar" class="a"><div class="a" style="left:0;width:1122px;top:5px;text-align:center;font-size:11.6px;line-height:14px;color:#111">Sin título 1</div><svg style="left:22px;top:3px" width="16" height="16" viewBox="0 0 16 16"><defs><linearGradient id="qr" x1="0" y1="0" x2="1" y2="1"><stop offset="0" stop-color="#92a6d4"/><stop offset="0.45" stop-color="#2c4490"/><stop offset="1" stop-color="#1a2c78"/></linearGradient></defs><circle cx="8" cy="7.500" r="5.400" fill="#f6f6f6" stroke="url(#qr)" stroke-width="2.400"/><path d="M5 7.500H11M8 4.500V10.500" stroke="#d8b0b0" stroke-width="0.600"/><path d="M5.200 9.200 H8" stroke="#e88080" stroke-width="0.600"/><circle cx="8" cy="7.500" r="2.400" fill="none" stroke="#c8c8c8" stroke-width="0.500"/><path d="M8.600 8.200 L12.400 12.400" stroke="#f09c10" stroke-width="2.200" stroke-linecap="round"/><path d="M8.900 7.900 L12.300 11.700" stroke="#ffd850" stroke-width="0.800" stroke-linecap="round"/><path d="M12.600 12.600 L13.600 13.700" stroke="#e86464" stroke-width="2.200" stroke-linecap="round"/></svg></div>
<div id="hruler" class="a">
<div class="a hl" style="left:23px">-50</div><div class="a ht" style="left:23px"></div>
<div class="a hl" style="left:73px">-40</div><div class="a ht" style="left:73px"></div>
<div class="a hl" style="left:123px">-30</div><div class="a ht" style="left:123px"></div>
<div class="a hl" style="left:173px">-20</div><div class="a ht" style="left:173px"></div>
<div class="a hl" style="left:223px">-10</div><div class="a ht" style="left:223px"></div>
<div class="a hl" style="left:273px">0</div><div class="a ht" style="left:273px"></div>
<div class="a hl" style="left:323px">10</div><div class="a ht" style="left:323px"></div>
<div class="a hl" style="left:373px">20</div><div class="a ht" style="left:373px"></div>
<div class="a hl" style="left:423px">30</div><div class="a ht" style="left:423px"></div>
<div class="a hl" style="left:473px">40</div><div class="a ht" style="left:473px"></div>
<div class="a hl" style="left:523px">50</div><div class="a ht" style="left:523px"></div>
<div class="a hl" style="left:573px">60</div><div class="a ht" style="left:573px"></div>
<div class="a hl" style="left:623px">70</div><div class="a ht" style="left:623px"></div>
<div class="a hl" style="left:673px">80</div><div class="a ht" style="left:673px"></div>
<div class="a hl" style="left:723px">90</div><div class="a ht" style="left:723px"></div>
<div class="a hl" style="left:773px">100</div><div class="a ht" style="left:773px"></div>
<div class="a hl" style="left:823px">110</div><div class="a ht" style="left:823px"></div>
<div class="a hl" style="left:873px">120</div><div class="a ht" style="left:873px"></div>
<div class="a hl" style="left:923px">130</div><div class="a ht" style="left:923px"></div>
<div class="a hl" style="left:973px">140</div><div class="a ht" style="left:973px"></div>
<div class="a hl" style="left:1023px">150</div><div class="a ht" style="left:1023px"></div>
<svg style="left:0;top:0" width="1082" height="23"><path d="M417.4 13 L428.6 13 L423 19.6 Z" fill="#000"/></svg>
</div>
<div id="vruler" class="a">
<div class="a vl" style="left:-14px;top:22px">80</div><div class="a vt" style="top:27px"></div>
<div class="a vl" style="left:-14px;top:72px">70</div><div class="a vt" style="top:77px"></div>
<div class="a vl" style="left:-14px;top:122px">60</div><div class="a vt" style="top:127px"></div>
<div class="a vl" style="left:-14px;top:172px">50</div><div class="a vt" style="top:177px"></div>
<div class="a vl" style="left:-14px;top:222px">40</div><div class="a vt" style="top:227px"></div>
<div class="a vl" style="left:-14px;top:272px">30</div><div class="a vt" style="top:277px"></div>
<div class="a vl" style="left:-14px;top:322px">20</div><div class="a vt" style="top:327px"></div>
<div class="a vl" style="left:-14px;top:372px">10</div><div class="a vt" style="top:377px"></div>
<div class="a vl" style="left:-14px;top:422px">0</div><div class="a vt" style="top:427px"></div>
<div class="a vl" style="left:-14px;top:472px">-10</div><div class="a vt" style="top:477px"></div>
<div class="a vl" style="left:-14px;top:522px">-20</div><div class="a vt" style="top:527px"></div>
<div class="a vl" style="left:-14px;top:572px">-30</div><div class="a vt" style="top:577px"></div>
<svg style="left:0;top:0" width="23" height="593"><path d="M13 171 L13 183 L19.6 177 Z" fill="#000"/></svg>
</div>
<div class="a" style="left:72px;top:132px;width:23px;height:23px;background:#ececec"></div>
<div id="canvas" class="a"><svg style="left:0;top:0" width="1043" height="577">
<defs><radialGradient id="ring" cx="50%" cy="50%" r="50%"><stop offset="0" stop-color="#000" stop-opacity="0"/><stop offset="0.74" stop-color="#101820" stop-opacity="0"/><stop offset="0.84" stop-color="#2c3a46"/><stop offset="0.92" stop-color="#4e6272"/><stop offset="0.975" stop-color="#5a6e7e"/><stop offset="1" stop-color="#485a68"/></radialGradient></defs>
<path d="M50 27h1v1h-1zM50 77h1v1h-1zM50 127h1v1h-1zM50 177h1v1h-1zM50 227h1v1h-1zM50 277h1v1h-1zM50 327h1v1h-1zM50 377h1v1h-1zM50 427h1v1h-1zM50 477h1v1h-1zM50 527h1v1h-1zM100 27h1v1h-1zM100 77h1v1h-1zM100 127h1v1h-1zM100 177h1v1h-1zM100 227h1v1h-1zM100 277h1v1h-1zM100 327h1v1h-1zM100 377h1v1h-1zM100 427h1v1h-1zM100 477h1v1h-1zM100 527h1v1h-1zM150 27h1v1h-1zM150 77h1v1h-1zM150 127h1v1h-1zM150 177h1v1h-1zM150 227h1v1h-1zM150 277h1v1h-1zM150 327h1v1h-1zM150 377h1v1h-1zM150 427h1v1h-1zM150 477h1v1h-1zM150 527h1v1h-1zM200 27h1v1h-1zM200 77h1v1h-1zM200 127h1v1h-1zM200 177h1v1h-1zM200 227h1v1h-1zM200 277h1v1h-1zM200 327h1v1h-1zM200 377h1v1h-1zM200 427h1v1h-1zM200 477h1v1h-1zM200 527h1v1h-1zM250 27h1v1h-1zM250 77h1v1h-1zM250 127h1v1h-1zM250 177h1v1h-1zM250 227h1v1h-1zM250 277h1v1h-1zM250 327h1v1h-1zM250 377h1v1h-1zM250 427h1v1h-1zM250 477h1v1h-1zM250 527h1v1h-1zM300 27h1v1h-1zM300 77h1v1h-1zM300 127h1v1h-1zM300 177h1v1h-1zM300 227h1v1h-1zM300 277h1v1h-1zM300 327h1v1h-1zM300 377h1v1h-1zM300 427h1v1h-1zM300 477h1v1h-1zM300 527h1v1h-1zM350 27h1v1h-1zM350 77h1v1h-1zM350 127h1v1h-1zM350 177h1v1h-1zM350 227h1v1h-1zM350 277h1v1h-1zM350 327h1v1h-1zM350 377h1v1h-1zM350 427h1v1h-1zM350 477h1v1h-1zM350 527h1v1h-1zM400 27h1v1h-1zM400 77h1v1h-1zM400 127h1v1h-1zM400 177h1v1h-1zM400 227h1v1h-1zM400 277h1v1h-1zM400 327h1v1h-1zM400 377h1v1h-1zM400 427h1v1h-1zM400 477h1v1h-1zM400 527h1v1h-1zM450 27h1v1h-1zM450 77h1v1h-1zM450 127h1v1h-1zM450 177h1v1h-1zM450 227h1v1h-1zM450 277h1v1h-1zM450 327h1v1h-1zM450 377h1v1h-1zM450 427h1v1h-1zM450 477h1v1h-1zM450 527h1v1h-1zM500 27h1v1h-1zM500 77h1v1h-1zM500 127h1v1h-1zM500 177h1v1h-1zM500 227h1v1h-1zM500 277h1v1h-1zM500 327h1v1h-1zM500 377h1v1h-1zM500 427h1v1h-1zM500 477h1v1h-1zM500 527h1v1h-1zM550 27h1v1h-1zM550 77h1v1h-1zM550 127h1v1h-1zM550 177h1v1h-1zM550 227h1v1h-1zM550 277h1v1h-1zM550 327h1v1h-1zM550 377h1v1h-1zM550 427h1v1h-1zM550 477h1v1h-1zM550 527h1v1h-1zM600 27h1v1h-1zM600 77h1v1h-1zM600 127h1v1h-1zM600 177h1v1h-1zM600 227h1v1h-1zM600 277h1v1h-1zM600 327h1v1h-1zM600 377h1v1h-1zM600 427h1v1h-1zM600 477h1v1h-1zM600 527h1v1h-1zM650 27h1v1h-1zM650 77h1v1h-1zM650 127h1v1h-1zM650 177h1v1h-1zM650 227h1v1h-1zM650 277h1v1h-1zM650 327h1v1h-1zM650 377h1v1h-1zM650 427h1v1h-1zM650 477h1v1h-1zM650 527h1v1h-1zM700 27h1v1h-1zM700 77h1v1h-1zM700 127h1v1h-1zM700 177h1v1h-1zM700 227h1v1h-1zM700 277h1v1h-1zM700 327h1v1h-1zM700 377h1v1h-1zM700 427h1v1h-1zM700 477h1v1h-1zM700 527h1v1h-1zM750 27h1v1h-1zM750 77h1v1h-1zM750 127h1v1h-1zM750 177h1v1h-1zM750 227h1v1h-1zM750 277h1v1h-1zM750 327h1v1h-1zM750 377h1v1h-1zM750 427h1v1h-1zM750 477h1v1h-1zM750 527h1v1h-1zM800 27h1v1h-1zM800 77h1v1h-1zM800 127h1v1h-1zM800 177h1v1h-1zM800 227h1v1h-1zM800 277h1v1h-1zM800 327h1v1h-1zM800 377h1v1h-1zM800 427h1v1h-1zM800 477h1v1h-1zM800 527h1v1h-1zM850 27h1v1h-1zM850 77h1v1h-1zM850 127h1v1h-1zM850 177h1v1h-1zM850 227h1v1h-1zM850 277h1v1h-1zM850 327h1v1h-1zM850 377h1v1h-1zM850 427h1v1h-1zM850 477h1v1h-1zM850 527h1v1h-1zM900 27h1v1h-1zM900 77h1v1h-1zM900 127h1v1h-1zM900 177h1v1h-1zM900 227h1v1h-1zM900 277h1v1h-1zM900 327h1v1h-1zM900 377h1v1h-1zM900 427h1v1h-1zM900 477h1v1h-1zM900 527h1v1h-1zM950 27h1v1h-1zM950 77h1v1h-1zM950 127h1v1h-1zM950 177h1v1h-1zM950 227h1v1h-1zM950 277h1v1h-1zM950 327h1v1h-1zM950 377h1v1h-1zM950 427h1v1h-1zM950 477h1v1h-1zM950 527h1v1h-1zM1000 27h1v1h-1zM1000 77h1v1h-1zM1000 127h1v1h-1zM1000 177h1v1h-1zM1000 227h1v1h-1zM1000 277h1v1h-1zM1000 327h1v1h-1zM1000 377h1v1h-1zM1000 427h1v1h-1zM1000 477h1v1h-1zM1000 527h1v1h-1z" fill="#3a3a3a"/>
<path d="M250.5 0V577M750.5 0V577M0 427.5H1043" stroke="#171717" stroke-width="1" fill="none"/>
<path d="M230 427.5H270M250.5 407V448" stroke="#7c0000" stroke-width="1" fill="none"/><circle cx="250.5" cy="427.5" r="4.5" stroke="#7c0000" fill="none"/>
<circle cx="400.1" cy="177.1" r="39.2" fill="url(#ring)"/>
<g transform="translate(399.2,176.2)"><path d="M0 0 L0 23.8 L5.4 18.6 L9.6 28.6 L12.8 27.2 L8.8 17.4 L16.9 16.4 Z" fill="#fff" stroke="#fff" stroke-width="3" stroke-linejoin="round"/><path d="M0 0 L0 23.8 L5.4 18.6 L9.6 28.6 L12.8 27.2 L8.8 17.4 L16.9 16.4 Z" fill="#fff" stroke="#1a1a1a" stroke-width="1.2" stroke-linejoin="round"/></g>
</svg></div>
<div id="vscroll" class="a"><div class="a" style="left:5px;top:3px;width:8px;height:411px;border-radius:4px;background:#7c7c7c"></div></div>
<div id="hscroll" class="a"><div class="a" style="right:0;top:0;width:71px;height:16px;background:#ececec;text-align:right;font-size:13px;line-height:17px;color:#111;padding-right:1px">10 &lt; 100</div></div>
<div class="a" style="left:1153px;top:108px;width:1px;height:690px;background:#e4e4e4"></div><div class="a" style="left:1154px;top:108px;width:1px;height:690px;background:#b8b8b8"></div><div class="a" style="left:1155px;top:108px;width:1px;height:690px;background:#cecece"></div>
<div class="a" style="left:72px;top:748px;width:1081px;height:2px;background:#bcbcbc"></div>
<div class="a" style="left:72px;top:750px;width:1081px;height:21px;background:#fff;border-bottom:1px solid #c4c4c4"><div class="a" style="left:5px;top:1px;font-size:13px;line-height:16px;color:#0000c8;white-space:nowrap"><i>Comando:</i> new</div></div>
<div class="a" style="left:73px;top:777.5px;font-size:13.4px;line-height:16px;color:#111">Comando:</div>
<div class="a" style="left:138px;top:776px;width:989px;height:18px;background:#fff"></div>
<div class="a" style="left:1127px;top:772px;width:26px;height:26px;border:1px solid #b8b8b8;background:linear-gradient(#e6e6e6,#f6f6f6)"><div class="a" style="left:5px;top:7px;width:14px;height:10px;border:1px solid #777;background:#f0f0f0"></div><div class="a" style="left:5px;top:7px;width:14px;height:3px;background:#000"></div></div>
<div id="right" class="a">
<div class="a" style="left:0;top:0;width:298px;height:22px;background:linear-gradient(#eeeeee,#dcdcdc);border-bottom:1px solid #c0c0c0"><div class="a" style="left:0;width:333px;top:4px;text-align:center;font-size:11.8px;line-height:14px;color:#222">Lista de capas</div></div>
<div class="a" style="left:-1.2px;top:22px;width:60.8px;height:26.5px;border:1px solid #b4b4b4;background:linear-gradient(#e8e8e8,#f8f8f8)"></div>
<div class="a" style="left:58.5px;top:22px;width:60.8px;height:26.5px;border:1px solid #b4b4b4;background:linear-gradient(#e8e8e8,#f8f8f8)"></div>
<div class="a" style="left:118.2px;top:22px;width:60.8px;height:26.5px;border:1px solid #b4b4b4;background:linear-gradient(#e8e8e8,#f8f8f8)"></div>
<div class="a" style="left:177.9px;top:22px;width:60.8px;height:26.5px;border:1px solid #b4b4b4;background:linear-gradient(#e8e8e8,#f8f8f8)"></div>
<div class="a" style="left:237.6px;top:22px;width:60.8px;height:26.5px;border:1px solid #b4b4b4;background:linear-gradient(#e8e8e8,#f8f8f8)"></div>
<div class="a" style="left:0;top:47.500px;width:298px;height:1px;background:#b4b4b4"></div>
<div class="a" style="left:5px;top:55px;width:16px;height:9px;border:1px solid #000;background:#fff"></div>
<div class="a" style="left:27px;top:51px;font-size:13px;line-height:16px;color:#111">0</div>
<svg style="left:0;top:0" width="298" height="690" viewBox="1156 108 298 690"><circle cx="1163.900" cy="117.900" r="6.900" fill="#6e6e6e"/><path d="M1160.900 114.900 L1166.900 120.900 M1166.900 114.900 L1160.900 120.900" stroke="#fff" stroke-width="2" stroke-linecap="round"/><circle cx="1182" cy="117.900" r="6.900" fill="#6e6e6e"/><path d="M1180.400 116.300 V114.600 H1185.600 V118.800 H1183.800" stroke="#fff" stroke-width="1.100" fill="none"/><rect x="1178.400" y="116.500" width="5.200" height="4.400" fill="none" stroke="#fff" stroke-width="1.100"/><g transform="translate(1185.1,142.6) scale(1.0)"><path d="M-7.650 0.500 C-5.600 -6.200 4.800 -7.400 7.650 0.300 C5.600 5.800 -4.200 7.600 -7.650 0.500 Z" fill="#000"/><path d="M-5.300 -1.800 A5.300 6 0 0 0 5.300 -1.800 Z" fill="#fff"/><circle cx="0" cy="-0.700" r="3.500" fill="#000"/><circle cx="-1.200" cy="-1.500" r="0.800" fill="#8a8a8a"/></g><g transform="translate(1244.8,142.6) scale(1.0)"><path d="M-7.650 0.500 C-5.600 -6.200 4.800 -7.400 7.650 0.300 C5.600 5.800 -4.200 7.600 -7.650 0.500 Z" fill="#a4a4a4"/><path d="M-5.300 -1.800 A5.300 6 0 0 0 5.300 -1.800 Z" fill="#fff"/><circle cx="0" cy="-0.700" r="3.500" fill="#a4a4a4"/><circle cx="-1.200" cy="-1.500" r="0.800" fill="#d0d0d0"/></g><path d="M1303.400 136.800 H1306.200 V141.600 H1311 V144.400 H1306.200 V149.200 H1303.400 V144.400 H1298.600 V141.600 H1303.400 Z" fill="#f00000" stroke="#b00000" stroke-width="0.5"/><rect x="1358.800" y="141.600" width="12.200" height="2.800" fill="#f00000" stroke="#b00000" stroke-width="0.5"/><g transform="translate(1418.3,149.6) rotate(-45.2)"><path d="M0 0 L4.500 -2.2 L20.011246837716122 -2.2 L20.011246837716122 2.2 L4.500 2.2 Z" fill="#f0a830" stroke="#9c5c10" stroke-width="0.5"/><path d="M4.500 -0.300 L18.011246837716122 -0.300" stroke="#ffd860" stroke-width="1.200"/><path d="M0 0 L4.500 -2.2 L4.500 2.2 Z" fill="#f0d8b0" stroke="#9c5c10" stroke-width="0.400"/><path d="M0 0 L1.800 -0.900 L1.800 0.900 Z" fill="#222"/><rect x="17.811246837716123" y="-2.2" width="2.200" height="4.4" fill="#e04030"/></g><g transform="translate(1394.6,173.2) rotate(-44.1)"><path d="M0 0 L4.500 -2 L18.669761648184007 -2 L18.669761648184007 2 L4.500 2 Z" fill="#f0a830" stroke="#9c5c10" stroke-width="0.5"/><path d="M4.500 -0.300 L16.669761648184007 -0.300" stroke="#ffd860" stroke-width="1.200"/><path d="M0 0 L4.500 -2 L4.500 2 Z" fill="#f0d8b0" stroke="#9c5c10" stroke-width="0.400"/><path d="M0 0 L1.800 -0.900 L1.800 0.900 Z" fill="#222"/><rect x="16.469761648184008" y="-2" width="2.200" height="4" fill="#e04030"/></g><g transform="translate(1423,166.8) scale(1.0196078431372548)"><path d="M-7.650 0.500 C-5.600 -6.200 4.800 -7.400 7.650 0.300 C5.600 5.800 -4.200 7.600 -7.650 0.500 Z" fill="#000"/><path d="M-5.300 -1.800 A5.300 6 0 0 0 5.300 -1.800 Z" fill="#fff"/><circle cx="0" cy="-0.700" r="3.500" fill="#000"/><circle cx="-1.200" cy="-1.500" r="0.800" fill="#8a8a8a"/></g><path d="M1441.600 166 V164 A3.200 3.200 0 0 1 1448 164 V166" fill="none" stroke="#b4b4b4" stroke-width="1.400"/><rect x="1439.800" y="166" width="10.200" height="7.600" fill="#b4b4b4"/></svg>
</div>
<div id="rtb" class="a">
<div class="a hd" style="left:8px;top:8px"></div>
<div class="a hd" style="left:14px;top:8px"></div>
<div class="a hd" style="left:20px;top:8px"></div>
<div class="a hd" style="left:26px;top:8px"></div>
<div class="a hd" style="left:32px;top:8px"></div>
<div class="a press" style="left:2px;top:12px;width:42.5px;height:42.5px;border-radius:6px"></div>
<div class="a press" style="left:2px;top:309px;width:42.5px;height:42.5px;border-radius:6px"></div>
<div class="a" style="left:3px;top:153px;width:43px;height:1px;background-image:linear-gradient(90deg,#555 0,#555 1px,transparent 1px,transparent 3px);background-size:3px 1px"></div>
<div class="a" style="left:3px;top:301px;width:43px;height:1px;background-image:linear-gradient(90deg,#555 0,#555 1px,transparent 1px,transparent 3px);background-size:3px 1px"></div>
<svg style="left:0;top:0" width="46" height="690" viewBox="1454 108 46 690"><rect x="1463.5" y="127" width="27.400" height="27.600" fill="#fff" stroke="#222" stroke-width="0.9"/><rect x="1463.5" y="127" width="27.400" height="5" fill="#000"/><rect x="1464.3" y="127.8" width="3" height="3" fill="#fff"/><rect x="1463.5" y="173.8" width="27.400" height="27.600" fill="#fff" stroke="#222" stroke-width="0.9"/><rect x="1463.5" y="173.8" width="27.400" height="5" fill="#000"/><rect x="1464.3" y="174.60000000000002" width="3" height="3" fill="#fff"/><rect x="1463.5" y="220" width="27.400" height="27.600" fill="#fff" stroke="#222" stroke-width="0.9"/><rect x="1463.5" y="220" width="27.400" height="5" fill="#000"/><rect x="1464.3" y="220.8" width="3" height="3" fill="#fff"/><rect x="1463.5" y="276" width="27.400" height="27.600" fill="#fff" stroke="#222" stroke-width="0.9"/><rect x="1463.5" y="276" width="27.400" height="5" fill="#000"/><rect x="1464.3" y="276.8" width="3" height="3" fill="#fff"/><rect x="1463.5" y="322.2" width="27.400" height="27.600" fill="#fff" stroke="#222" stroke-width="0.9"/><rect x="1463.5" y="322.2" width="27.400" height="5" fill="#000"/><rect x="1464.3" y="323.0" width="3" height="3" fill="#fff"/><rect x="1463.5" y="368.3" width="27.400" height="27.600" fill="#fff" stroke="#222" stroke-width="0.9"/><rect x="1463.5" y="368.3" width="27.400" height="5" fill="#000"/><rect x="1464.3" y="369.1" width="3" height="3" fill="#fff"/><rect x="1463.5" y="424.6" width="27.400" height="27.600" fill="#fff" stroke="#222" stroke-width="0.9"/><rect x="1463.5" y="424.6" width="27.400" height="5" fill="#000"/><rect x="1464.3" y="425.40000000000003" width="3" height="3" fill="#fff"/><rect x="1463.5" y="470.8" width="27.400" height="27.600" fill="#fff" stroke="#222" stroke-width="0.9"/><rect x="1463.5" y="470.8" width="27.400" height="5" fill="#000"/><rect x="1464.3" y="471.6" width="3" height="3" fill="#fff"/><path d="M1471.5 140 L1477.5 137 L1477.5 147 L1471.5 150 Z" fill="#888" stroke="#555" stroke-width="0.500"/><path d="M1474.0 139 L1480.0 136 L1480.0 146 L1474.0 149 Z" fill="#aaa" stroke="#555" stroke-width="0.500"/><path d="M1476.5 138 L1483.5 135 L1483.5 145 L1476.5 148 Z" fill="#fff" stroke="#777" stroke-width="0.500"/><path d="M1478.5 145 L1482.0 137.5 L1482.0 143.5 Z" fill="none" stroke="#e03030" stroke-width="0.800"/><rect x="1470.0" y="183.8" width="10.500" height="8" fill="#f4eec0" stroke="#777" stroke-width="0.700"/><circle cx="1479.0" cy="191.3" r="4.600" fill="#f4eec0" fill-opacity="0.800" stroke="#777" stroke-width="0.700"/><rect x="1468.5" y="231" width="17" height="10.500" rx="2" fill="#f0f0f0" stroke="#b8cce8" stroke-width="0.900"/><rect x="1467.0" y="285.0" width="4" height="3" fill="#000"/><rect x="1473.5" y="285.0" width="13.500" height="3" fill="#fff" stroke="#333" stroke-width="0.600"/><rect x="1467.0" y="290.8" width="4" height="3" fill="#000"/><rect x="1473.5" y="290.8" width="13.500" height="3" fill="#fff" stroke="#333" stroke-width="0.600"/><rect x="1467.0" y="296.6" width="4" height="3" fill="#000"/><rect x="1473.5" y="296.6" width="13.500" height="3" fill="#fff" stroke="#333" stroke-width="0.600"/><path d="M1470.0 331.7 L1484.5 331.7 L1478.7 338.7 L1478.7 345.2 L1475.8 343.7 L1475.8 338.7 Z" fill="#8c8c8c" stroke="#555" stroke-width="0.500"/><ellipse cx="1477.25" cy="331.7" rx="7.250" ry="1.400" fill="#bbb" stroke="#666" stroke-width="0.500"/><path d="M1467.5 384.8 H1486.5" stroke="#ff9090" stroke-width="0.700"/><path d="M1469.0 378.3 L1472.0 380.8 L1472.0 388.8 L1469.0 391.3 Z" fill="#fff" stroke="#333" stroke-width="0.700"/><path d="M1472.0 380.8 L1476.5 381.8 L1476.5 387.8 L1472.0 388.8 Z" fill="#ddd" stroke="#333" stroke-width="0.600"/><rect x="1476.5" y="381.3" width="8" height="7" rx="1" fill="#888" stroke="#555" stroke-width="0.500"/><rect x="1466.5" y="433.1" width="9" height="1.200" fill="#666"/><rect x="1466.5" y="436.40000000000003" width="9.5" height="1.200" fill="#666"/><rect x="1466.5" y="439.70000000000005" width="12" height="1.200" fill="#666"/><rect x="1466.5" y="443.0" width="11.5" height="1.200" fill="#666"/><path d="M1463.5 447.1 H1490.9" stroke="#444" stroke-width="0.600"/><rect x="1466.5" y="448.6" width="2" height="1.600" fill="#444"/><rect x="1473.0" y="448.6" width="15" height="1.600" fill="#444"/><rect x="1470.5" y="479.3" width="13.500" height="15.500" rx="0.800" fill="#c88a20" stroke="#a06a10" stroke-width="0.500"/><rect x="1472.0" y="480.8" width="10.500" height="12.500" fill="#f4f4f4"/><rect x="1474.0" y="478.0" width="6.500" height="3" rx="0.600" fill="#9c9c90" stroke="#666" stroke-width="0.400"/><path d="M1473.5 484.3h7.500M1473.5 486.3h7M1473.5 488.3h7.500M1473.5 490.3h5" stroke="#aaa" stroke-width="0.700"/><path d="M1480.0 493.3 L1482.5 493.3 L1482.5 490.8 Z" fill="#999"/></svg>
</div>
<div id="status" class="a">
<div class="a" style="left:2px;top:4px;width:251px;height:20px;background:#e2b8b8;border-top:1px solid #f07878;border-bottom:1px solid #f07878"></div>
<div class="a" style="left:253px;top:2px;width:1px;height:42px;background:#9a9a9a"></div>
<div class="a" style="left:1px;top:-5px;width:1px;height:36px;background:#f07878"></div>
<div class="a" style="left:253px;top:-3px;width:1px;height:27px;background:#f07878"></div>
<div class="a st" style="left:2.5px;top:9px;letter-spacing:0.55px">30,50</div>
<div class="a st" style="left:2.5px;top:29px;letter-spacing:0.3px">@30,50</div>
<div class="a st" style="left:256px;top:9px;letter-spacing:0.75px">58.3095&lt;59°</div>
<div class="a st" style="left:256px;top:29px;letter-spacing:0.6px">@58.3095&lt;59°</div>
<div class="a dot" style="left:507px;top:21px"></div>
<div class="a st" style="left:569px;top:19px">Seleccionar entidad o región</div>
<svg style="left:716px;top:7px" width="20" height="31"><path d="M1.5 10 C1.5 3 5 1 9.5 1 C14 1 17.500 3 17.500 10 L17.500 21 C17.500 27 14 29.500 9.500 29.500 C5 29.500 1.500 27 1.500 21 Z" fill="#fff" stroke="#222" stroke-width="1"/><path d="M1.5 14.500 C6 13 13 13 17.500 14.500" fill="none" stroke="#222" stroke-width="1"/><ellipse cx="9.500" cy="7.500" rx="1.600" ry="3.500" fill="#fff" stroke="#222" stroke-width="1"/><path d="M9.500 11V14" stroke="#222" stroke-width="1"/></svg>
<div class="a dot" style="left:941px;top:21px"></div>
<div class="a st" style="left:949px;top:19px">No hay entidades seleccionadas.</div>
<div class="a dot" style="left:1270px;top:21px"></div>
</div>
</body></html>
